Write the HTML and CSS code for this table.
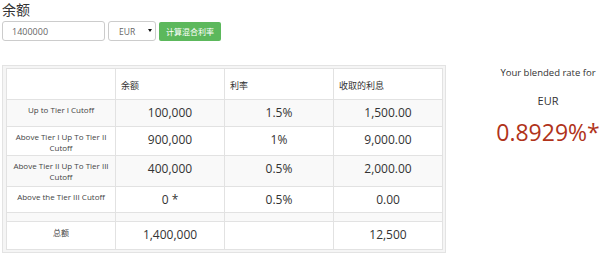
FILE: index.html
```html
<!DOCTYPE html>
<html lang="zh">
<head>
<meta charset="utf-8">
<title>余额</title>
<link rel="stylesheet" href="styles.css">
</head>
<body>
<h4 class="title">余额</h4>
<form class="calc-form">
  <input class="amount" type="text" value="1400000">
  <span class="select-wrap">
    <select class="currency"><option>EUR</option></select>
  </span>
  <button type="button" class="btn-calc">计算混合利率</button>
</form>
<div class="main">
  <div class="panel">
    <table class="rates">
      <thead>
        <tr class="head">
          <th></th>
          <th>余额</th>
          <th>利率</th>
          <th>收取的利息</th>
        </tr>
      </thead>
      <tbody>
        <tr class="r1">
          <td class="label">Up to Tier I Cutoff</td>
          <td class="num">100,000</td>
          <td class="num">1.5%</td>
          <td class="num">1,500.00</td>
        </tr>
        <tr class="r2">
          <td class="label">Above Tier I Up To Tier II Cutoff</td>
          <td class="num">900,000</td>
          <td class="num">1%</td>
          <td class="num">9,000.00</td>
        </tr>
        <tr class="r3">
          <td class="label">Above Tier II Up To Tier III Cutoff</td>
          <td class="num">400,000</td>
          <td class="num">0.5%</td>
          <td class="num">2,000.00</td>
        </tr>
        <tr class="r4">
          <td class="label">Above the Tier III Cutoff</td>
          <td class="num">0 *</td>
          <td class="num">0.5%</td>
          <td class="num">0.00</td>
        </tr>
        <tr class="spacer">
          <td></td><td></td><td></td><td></td>
        </tr>
        <tr class="total">
          <td class="label">总额</td>
          <td class="num">1,400,000</td>
          <td class="num"></td>
          <td class="num">12,500</td>
        </tr>
      </tbody>
    </table>
  </div>
  <div class="result">
    <p class="result-label">Your blended rate for</p>
    <p class="result-cur">EUR</p>
    <p class="result-rate">0.8929%*</p>
  </div>
</div>
</body>
</html>
```
FILE: styles.css
```css
* { box-sizing: border-box; }
html, body { margin: 0; padding: 0; background: #fff; }
body {
  padding: 0 0 0 2px;
  font-family: "Open Sans", "Noto Sans CJK SC", sans-serif;
  color: #333;
}
.title {
  margin: 0;
  font-size: 14px;
  line-height: 20px;
  font-weight: normal;
  color: #333;
}
.calc-form {
  display: flex;
  align-items: flex-start;
  gap: 3px;
  margin-top: 1px;
  height: 20px;
}
.amount {
  display: block;
  width: 103px;
  height: 20px;
  border: 1px solid #ccc;
  border-radius: 3px;
  padding: 0 9px;
  font-family: "Open Sans", sans-serif;
  font-size: 9px;
  color: #666;
  outline: none;
}
.select-wrap {
  position: relative;
  display: block;
  width: 48px;
  height: 20px;
}
.select-wrap::after {
  content: "";
  position: absolute;
  right: 4px;
  top: 8px;
  border-left: 2px solid transparent;
  border-right: 2px solid transparent;
  border-top: 3px solid #111;
}
.currency {
  display: block;
  -webkit-appearance: none;
  appearance: none;
  width: 48px;
  height: 20px;
  border: 1px solid #ccc;
  border-radius: 3px;
  background: #fff;
  padding: 0 0 0 10px;
  font-family: "Open Sans", sans-serif;
  font-size: 8.5px;
  color: #666;
  outline: none;
}
.btn-calc {
  display: block;
  width: 62px;
  height: 19px;
  margin-top: 1px;
  border: none;
  border-radius: 2px;
  background: #5cb85c;
  color: #fff;
  font-family: "Noto Sans CJK SC", sans-serif;
  font-size: 8px;
  padding: 0;
}
.main {
  display: flex;
  align-items: flex-start;
  margin-top: 24px;
}
.panel {
  width: 444px;
  border: 1px solid #e3e3e3;
  background: #f5f5f5;
  padding: 2px 2px 2px 3px;
}
.rates {
  width: 100%;
  table-layout: fixed;
  border-collapse: collapse;
  background: #fff;
  border: 1px solid #e2e2e2;
}
.rates th, .rates td {
  border: 1px solid #e2e2e2;
  width: 25%;
}
.rates th {
  height: 31px;
  vertical-align: bottom;
  text-align: left;
  font-family: "Noto Sans CJK SC", sans-serif;
  font-weight: normal;
  font-size: 9px;
  line-height: 12px;
  padding: 0 5px 7px;
  color: #333;
}
.rates tbody tr:nth-child(odd) td { background: #f9f9f9; }
.rates td {
  vertical-align: top;
  text-align: center;
  padding: 4px 4px 0;
}
.rates td.label {
  font-size: 8px;
  line-height: 11px;
  color: #444;
  padding-left: 2px;
  padding-right: 2px;
}
.rates td.num {
  font-size: 12px;
  line-height: 18px;
  color: #333;
}
.r1 td { height: 27px; }
.r2 td { height: 29px; }
.r3 td { height: 31px; }
.r4 td { height: 26px; }
.spacer td { height: 9px; padding: 0; }
.total td { height: 28px; }
.total td.label {
  font-family: "Noto Sans CJK SC", sans-serif;
  font-size: 8px;
  padding-top: 5px;
}
.result {
  margin-left: 50px;
  width: 104px;
  text-align: center;
  white-space: nowrap;
}
.result p { margin: 0; }
.result-label {
  padding-top: 1px;
  font-size: 9.5px;
  line-height: 14px;
  color: #333;
}
.result-cur {
  margin-top: 14px !important;
  font-size: 11px;
  line-height: 14px;
  color: #333;
}
.result-rate {
  margin-top: 10px !important;
  font-size: 23px;
  line-height: 28px;
  color: #b0331a;
}
```
